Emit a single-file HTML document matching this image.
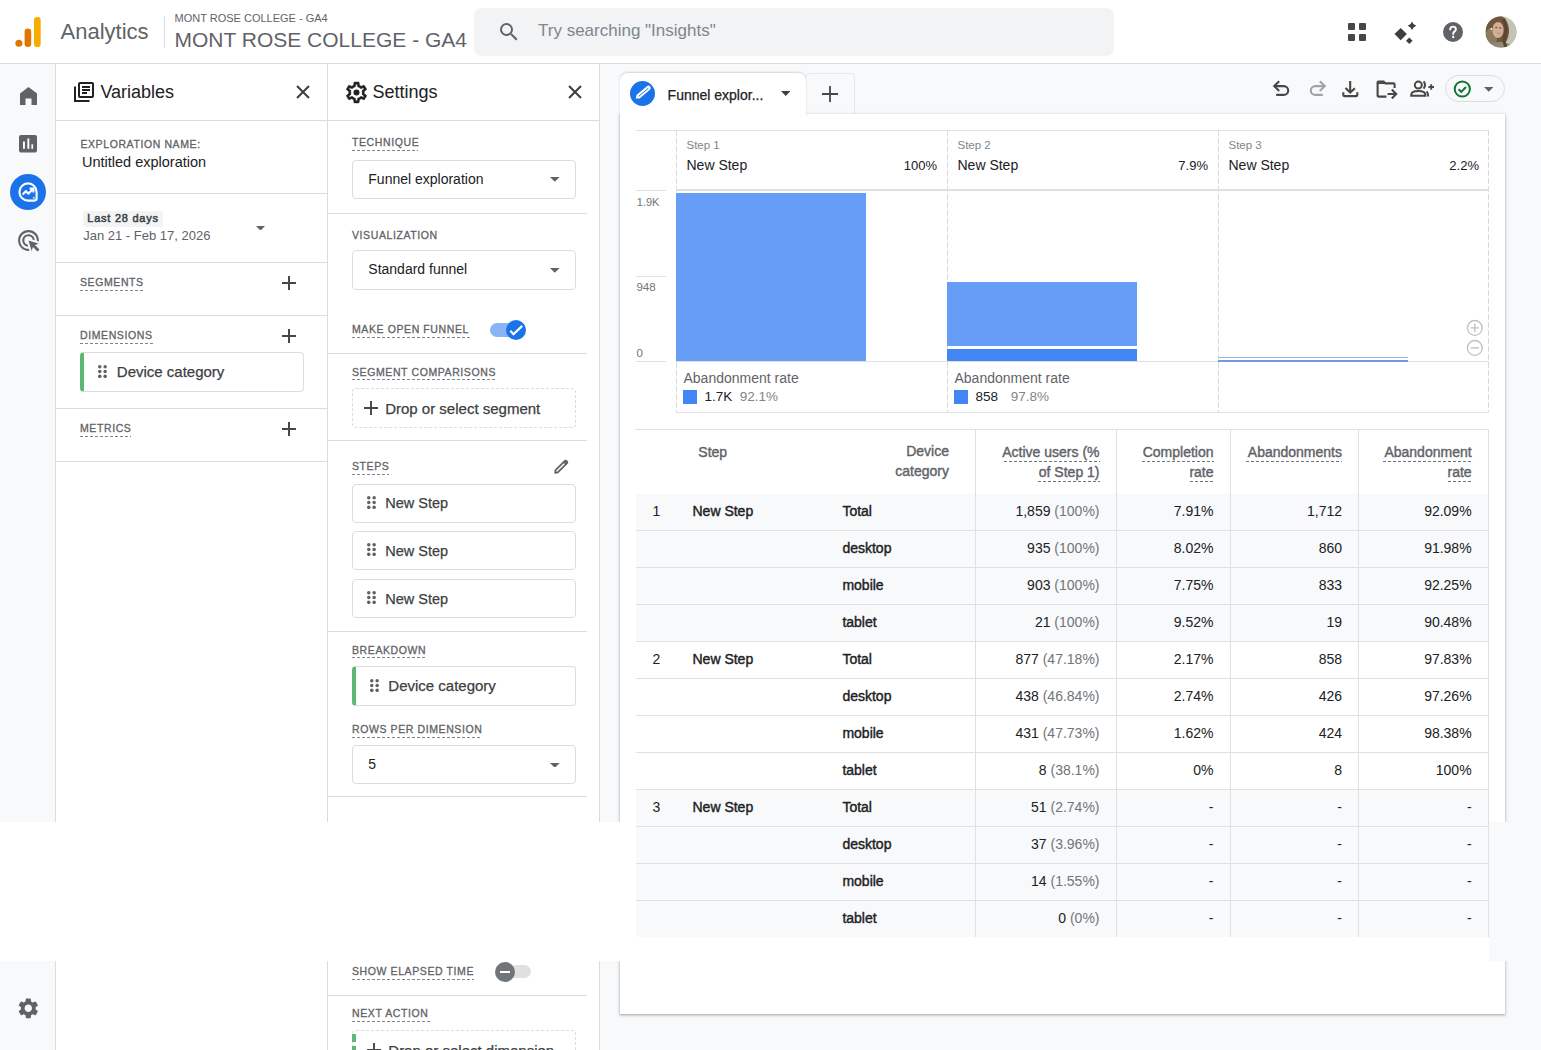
<!DOCTYPE html><html><head><meta charset="utf-8"><style>
html,body{margin:0;padding:0;width:1541px;height:1050px;overflow:hidden;background:#fff;position:relative;font-family:"Liberation Sans",sans-serif;}
.t{position:absolute;white-space:pre;line-height:1;}
svg{display:block;}
</style></head><body>
<div style="position:absolute;left:0px;top:0px;width:1541px;height:63px;background:#fff;"></div>
<div style="position:absolute;left:0px;top:63px;width:1541px;height:1px;background:#dadce0;"></div>
<div style="position:absolute;left:0px;top:64px;width:55px;height:986px;background:#f8f9fa;"></div>
<div style="position:absolute;left:55px;top:64px;width:1px;height:986px;background:#dadce0;"></div>
<div style="position:absolute;left:56px;top:64px;width:271px;height:986px;background:#fff;"></div>
<div style="position:absolute;left:327px;top:64px;width:1px;height:986px;background:#dadce0;"></div>
<div style="position:absolute;left:328px;top:64px;width:271px;height:986px;background:#fff;"></div>
<div style="position:absolute;left:599px;top:64px;width:1px;height:986px;background:#dadce0;"></div>
<div style="position:absolute;left:600px;top:64px;width:941px;height:986px;background:#f8f9fa;"></div>
<svg style="position:absolute;left:14px;top:16px;" width="28" height="32" viewBox="0 0 28 32">
<rect x="20" y="1" width="6.7" height="30" rx="3.35" fill="#f9ab00"/>
<rect x="10.6" y="12.6" width="6.6" height="18.4" rx="3.3" fill="#e37400"/>
<circle cx="4.9" cy="27.2" r="3.5" fill="#e37400"/>
</svg>
<div class="t" style="left:60.5px;top:21.38px;font-size:22px;color:#5f6368;font-weight:400;">Analytics</div>
<div style="position:absolute;left:164px;top:16px;width:1px;height:32px;background:#dadce0;"></div>
<div class="t" style="left:174.5px;top:12.69px;font-size:11px;color:#5f6368;font-weight:400;">MONT ROSE COLLEGE - GA4</div>
<div class="t" style="left:174.5px;top:29.42px;font-size:21px;color:#5f6368;font-weight:400;">MONT ROSE COLLEGE - GA4</div>
<div style="position:absolute;left:474px;top:8px;width:640px;height:48px;background:#f1f3f4;border-radius:8px;"></div>
<svg style="position:absolute;left:497px;top:20px;" width="24" height="24" viewBox="0 0 24 24"><path fill="#5f6368" d="M15.5 14h-.79l-.28-.27A6.47 6.47 0 0 0 16 9.5 6.5 6.5 0 1 0 9.5 16c1.61 0 3.09-.59 4.23-1.57l.27.28v.79l5 4.99L20.49 19l-4.99-5zm-6 0C7.01 14 5 11.99 5 9.5S7.01 5 9.5 5 14 7.01 14 9.5 11.99 14 9.5 14z"/></svg>
<div class="t" style="left:538px;top:21.81px;font-size:17px;color:#80868b;font-weight:400;">Try searching "Insights"</div>
<div style="position:absolute;left:1348px;top:23px;width:7px;height:7px;background:#474747;border-radius:1px;"></div>
<div style="position:absolute;left:1359px;top:23px;width:7px;height:7px;background:#474747;border-radius:1px;"></div>
<div style="position:absolute;left:1348px;top:34px;width:7px;height:7px;background:#474747;border-radius:1px;"></div>
<div style="position:absolute;left:1359px;top:34px;width:7px;height:7px;background:#474747;border-radius:1px;"></div>
<svg style="position:absolute;left:1392px;top:20px;" width="26" height="26" viewBox="0 0 26 26">
<path fill="#3c4043" d="M8.7 7.9 L14.9 14.1 L8.7 20.3 L2.5 14.1 Z"/>
<path fill="#3c4043" d="M17.3 17.5 L20.6 20.8 L17.3 24.1 L14 20.8 Z"/>
<path fill="#3c4043" d="M20 1.4 Q20.9 4.6 24.3 5.8 Q20.9 7 20 10.1 Q19.1 7 15.7 5.8 Q19.1 4.6 20 1.4 Z"/>
</svg>
<svg style="position:absolute;left:1443px;top:22px;" width="20" height="20" viewBox="0 0 20 20"><circle cx="10" cy="10" r="10" fill="#5f6368"/>
<path d="M7.2 7.6 Q7.2 4.6 10.1 4.6 Q12.9 4.6 12.9 7.2 Q12.9 8.6 11.4 9.6 Q10.2 10.4 10.2 12" stroke="#fff" stroke-width="1.9" fill="none" stroke-linecap="round"/>
<circle cx="10.2" cy="15" r="1.2" fill="#fff"/></svg>
<svg style="position:absolute;left:1485px;top:16px;filter:blur(0.5px);border-radius:50%;" width="32" height="32" viewBox="0 0 32 32"><defs><clipPath id="avc"><circle cx="16" cy="16" r="15.8"/></clipPath><filter id="avb" x="-10%" y="-10%" width="120%" height="120%"><feGaussianBlur stdDeviation="0.7"/></filter></defs><g clip-path="url(#avc)"><g filter="url(#avb)">
<rect width="32" height="32" fill="#b9baa9"/>
<rect x="21" y="0" width="11" height="32" fill="#c3c4b4"/>
<ellipse cx="12.5" cy="15" rx="11.5" ry="16" fill="#6f563d"/>
<ellipse cx="6" cy="22" rx="6" ry="10" fill="#8b7a5e"/>
<ellipse cx="15" cy="33" rx="13" ry="7" fill="#8f8a76"/>
<ellipse cx="13" cy="14" rx="5.6" ry="8" fill="#d2ae97"/>
<ellipse cx="11.2" cy="11.5" rx="1.3" ry=".7" fill="#7d5a45"/><ellipse cx="15.3" cy="12" rx="1.2" ry=".7" fill="#7d5a45"/>
<ellipse cx="13.6" cy="17.2" rx="2" ry=".7" fill="#bf8f7a"/>
<circle cx="6.3" cy="13" r=".9" fill="#f4efe6"/>
<path d="M18.5 3 Q22.5 10 20 20 Q18 26 21 31" stroke="#5a4431" stroke-width="3" fill="none"/>
<rect x="-2" y="-2" width="36" height="36" fill="none"/></g></g></svg>
<svg style="position:absolute;left:18px;top:84px;" width="22" height="24" viewBox="0 0 22 24"><path fill="#5f6368" d="M2 21 V9.5 L10.5 3 L19 9.5 V21 H13.5 V14.5 H7.5 V21 Z" /></svg>
<svg style="position:absolute;left:19px;top:135px;" width="18" height="18" viewBox="0 0 18 18"><rect x="0" y="0" width="18" height="17.6" rx="2" fill="#5f6368"/><rect x="4" y="6.5" width="1.9" height="7.3" fill="#fff"/><rect x="8.4" y="3.5" width="1.9" height="10.3" fill="#fff"/><rect x="12.4" y="9.3" width="1.7" height="4.5" fill="#fff"/></svg>
<div style="position:absolute;left:10px;top:174px;width:36px;height:36px;border-radius:50%;background:#1a73e8;"></div>
<svg style="position:absolute;left:17px;top:181px;" width="22" height="22" viewBox="0 0 22 22"><path d="M19.6 11 A8.6 8.6 0 1 0 11 19.6 H17.6 Q19.6 19.6 19.6 17.6 Z" stroke="#fff" stroke-width="2.1" fill="none"/>
<path d="M5.6 13.6 L8.9 10.2 L11.4 12.6 L15.6 8.4" stroke="#fff" stroke-width="2.1" fill="none"/><path d="M12.6 7.6 H16.4 V11.4" stroke="#fff" stroke-width="2.1" fill="none"/><circle cx="16.8" cy="16.8" r="0.9" fill="#fff"/></svg>
<svg style="position:absolute;left:15.8px;top:228.3px;" width="25" height="25" viewBox="0 0 24 24"><path fill="#5f6368" d="M11.71 17.99A5.993 5.993 0 0 1 6 12c0-3.31 2.69-6 6-6 3.220 0 5.840 2.530 5.990 5.710l-2.100-.630a3.999 3.999 0 1 0-4.810 4.810l.630 2.100zM22 12c0 .3-.01.6-.04.9l-1.970-.590c.010-.100.010-.210.010-.310 0-4.420-3.580-8-8-8s-8 3.580-8 8 3.580 8 8 8c.1 0 .21 0 .31-.01l.59 1.97c-.3.03-.6.04-.9.04-5.52 0-10-4.48-10-10S6.48 2 12 2s10 4.48 10 10zm-3.77 4.26L22 15l-10-3 3 10 1.26-3.77 4.27 4.27 1.98-1.98-4.28-4.26z"/></svg>
<svg style="position:absolute;left:15.7px;top:996.2px;" width="24.6" height="24.6" viewBox="0 0 24 24"><path fill="#5f6368" d="M19.14 12.94c.04-.3.06-.61.06-.94 0-.32-.02-.64-.07-.94l2.03-1.58a.49.49 0 0 0 .12-.61l-1.92-3.32a.488.488 0 0 0-.59-.22l-2.39.96c-.5-.38-1.03-.7-1.62-.94l-.36-2.54a.484.484 0 0 0-.48-.41h-3.84c-.24 0-.43.17-.47.41l-.36 2.54c-.59.24-1.13.57-1.62.94l-2.39-.96c-.22-.08-.47 0-.59.22L2.74 8.87c-.12.21-.08.47.12.61l2.03 1.58c-.05.3-.09.63-.09.94s.02.64.07.94l-2.03 1.58a.49.49 0 0 0-.12.61l1.92 3.32c.12.22.37.29.59.22l2.39-.96c.5.38 1.03.7 1.62.94l.36 2.54c.05.24.24.41.48.41h3.84c.24 0 .44-.17.47-.41l.36-2.54c.59-.24 1.13-.56 1.62-.94l2.39.96c.22.08.47 0 .59-.22l1.92-3.32c.12-.22.07-.47-.12-.61l-2.01-1.58zM12 15.6c-1.98 0-3.6-1.62-3.6-3.6s1.62-3.6 3.6-3.6 3.6 1.62 3.6 3.6-1.62 3.6-3.6 3.6z"/></svg>
<svg style="position:absolute;left:74px;top:82px;" width="20" height="20" viewBox="0 0 20 20"><path d="M1 4.5V19H15.5" stroke="#202124" stroke-width="2" fill="none"/>
<rect x="5" y="1" width="14" height="14" rx="1" stroke="#202124" stroke-width="2" fill="none"/>
<path d="M8 5H16M8 8H16M8 11H13" stroke="#202124" stroke-width="1.8"/></svg>
<div class="t" style="left:100.4px;top:82.96px;font-size:18px;color:#202124;font-weight:400;">Variables</div>
<svg style="position:absolute;left:296px;top:85px;" width="14" height="14" viewBox="0 0 14 14"><path d="M1 1L13 13M13 1L1 13" stroke="#3c4043" stroke-width="2"/></svg>
<div style="position:absolute;left:56px;top:120px;width:271px;height:1px;background:#dadce0;"></div>
<div class="t" style="left:80.4px;top:139.11px;font-size:10.5px;color:#5f6368;font-weight:400;letter-spacing:0.6px;-webkit-text-stroke:0.3px currentColor;">EXPLORATION NAME:</div>
<div class="t" style="left:82px;top:154.73px;font-size:14.5px;color:#202124;font-weight:400;">Untitled exploration</div>
<div style="position:absolute;left:56px;top:193px;width:271px;height:1px;background:#dadce0;"></div>
<div style="position:absolute;left:83px;top:211px;width:80px;height:15.5px;background:#f1f3f4;border-radius:2px;"></div>
<div class="t" style="left:87.3px;top:212.99px;font-size:11px;color:#3c4043;font-weight:400;letter-spacing:0.75px;-webkit-text-stroke:0.5px currentColor;">Last 28 days</div>
<div class="t" style="left:83.2px;top:229.00px;font-size:13px;color:#5f6368;font-weight:400;">Jan 21 - Feb 17, 2026</div>
<svg style="position:absolute;left:255.5px;top:225.8px;" width="9" height="4.6" viewBox="0 0 9 4.6"><path d="M0 0H9L4.5 4.6Z" fill="#5f6368"/></svg>
<div style="position:absolute;left:56px;top:262px;width:271px;height:1px;background:#dadce0;"></div>
<div class="t" style="left:80px;top:277.41px;font-size:10.5px;color:#5f6368;font-weight:400;letter-spacing:0.6px;-webkit-text-stroke:0.3px currentColor;">SEGMENTS</div>
<div style="position:absolute;left:80px;top:289.9px;width:62.6px;height:1px;background:repeating-linear-gradient(90deg,#80868b 0 3px,transparent 3px 5px);"></div>
<svg style="position:absolute;left:282px;top:276px;" width="14" height="14" viewBox="0 0 14 14"><path d="M7.0 0V14M0 7.0H14" stroke="#474747" stroke-width="2"/></svg>
<div style="position:absolute;left:56px;top:315px;width:271px;height:1px;background:#dadce0;"></div>
<div class="t" style="left:80px;top:330.11px;font-size:10.5px;color:#5f6368;font-weight:400;letter-spacing:0.6px;-webkit-text-stroke:0.3px currentColor;">DIMENSIONS</div>
<div style="position:absolute;left:80px;top:342.6px;width:73px;height:1px;background:repeating-linear-gradient(90deg,#80868b 0 3px,transparent 3px 5px);"></div>
<svg style="position:absolute;left:282px;top:329px;" width="14" height="14" viewBox="0 0 14 14"><path d="M7.0 0V14M0 7.0H14" stroke="#474747" stroke-width="2"/></svg>
<div style="position:absolute;box-sizing:border-box;left:80px;top:352px;width:224px;height:40px;border-radius:4px;border:1px solid #dadce0;border-left:4px solid #5bb974;"></div>
<svg style="position:absolute;left:97.5px;top:365px;" width="10" height="13" viewBox="0 0 10 13"><circle cx="1.75" cy="1.75" r="1.75" fill="#5f6368"/><circle cx="1.75" cy="6.55" r="1.75" fill="#5f6368"/><circle cx="1.75" cy="11.35" r="1.75" fill="#5f6368"/><circle cx="7.15" cy="1.75" r="1.75" fill="#5f6368"/><circle cx="7.15" cy="6.55" r="1.75" fill="#5f6368"/><circle cx="7.15" cy="11.35" r="1.75" fill="#5f6368"/></svg>
<div class="t" style="left:116.8px;top:364.10px;font-size:15px;color:#3c4043;font-weight:400;-webkit-text-stroke:0.25px currentColor;">Device category</div>
<div style="position:absolute;left:56px;top:408px;width:271px;height:1px;background:#dadce0;"></div>
<div class="t" style="left:80px;top:423.11px;font-size:10.5px;color:#5f6368;font-weight:400;letter-spacing:0.6px;-webkit-text-stroke:0.3px currentColor;">METRICS</div>
<div style="position:absolute;left:80px;top:435.6px;width:51.3px;height:1px;background:repeating-linear-gradient(90deg,#80868b 0 3px,transparent 3px 5px);"></div>
<svg style="position:absolute;left:282px;top:422px;" width="14" height="14" viewBox="0 0 14 14"><path d="M7.0 0V14M0 7.0H14" stroke="#474747" stroke-width="2"/></svg>
<div style="position:absolute;left:56px;top:461px;width:271px;height:1px;background:#dadce0;"></div>
<svg style="position:absolute;left:343.5px;top:79.7px;" width="25" height="25" viewBox="0 0 24 24"><path fill="#202124" stroke="#202124" stroke-width="0.5" d="M19.43 12.98c.04-.32.07-.64.07-.98 0-.34-.03-.66-.07-.98l2.11-1.65c.19-.15.24-.42.12-.64l-2-3.46a.5.5 0 0 0-.61-.22l-2.49 1c-.52-.4-1.08-.73-1.69-.98l-.38-2.65A.488.488 0 0 0 14 2h-4c-.25 0-.46.18-.49.42l-.38 2.65c-.61.25-1.170.590-1.690.980l-2.490-1a.566.566 0 0 0-.180-.030c-.170 0-.340.090-.430.250l-2 3.460c-.130.220-.070.490.120.640l2.110 1.650c-.040.320-.070.650-.070.980 0 .330.030.660.070.980l-2.110 1.650c-.190.150-.240.420-.120.640l2 3.460a.5.5 0 0 0 .610.220l2.490-1c.520.400 1.080.730 1.690.980l.380 2.650c.030.240.240.420.490.420h4c.250 0 .460-.180.490-.420l.380-2.650c.610-.250 1.170-.590 1.690-.980l2.490 1c.060.020.120.030.180.030.170 0 .340-.090.430-.250l2-3.460c.120-.220.070-.490-.120-.640l-2.110-1.650zm-1.98-1.71c.04.31.05.52.05.73 0 .21-.02.43-.05.73l-.14 1.13.89.7 1.08.84-.7 1.21-1.27-.51-1.04-.42-.9.68c-.43.32-.84.56-1.25.73l-1.06.43-.16 1.13-.2 1.35h-1.4l-.19-1.35-.16-1.13-1.06-.43c-.43-.18-.83-.41-1.23-.71l-.91-.7-1.06.43-1.27.51-.7-1.21 1.08-.84.89-.7-.14-1.13c-.03-.31-.05-.54-.05-.74s.02-.43.05-.73l.14-1.13-.89-.7-1.08-.84.7-1.21 1.27.51 1.04.42.9-.68c.43-.32.84-.56 1.25-.73l1.06-.43.16-1.13.2-1.35h1.39l.19 1.35.16 1.13 1.06.43c.43.18.83.41 1.23.71l.91.7 1.06-.43 1.27-.51.7 1.21-1.07.85-.89.7.14 1.13z"/><circle cx="12" cy="12" r="2.9" fill="#202124"/></svg>
<div class="t" style="left:372.5px;top:82.96px;font-size:18px;color:#202124;font-weight:400;">Settings</div>
<svg style="position:absolute;left:568px;top:85px;" width="14" height="14" viewBox="0 0 14 14"><path d="M1 1L13 13M13 1L1 13" stroke="#3c4043" stroke-width="2"/></svg>
<div style="position:absolute;left:328px;top:120px;width:271px;height:1px;background:#dadce0;"></div>
<div class="t" style="left:352px;top:137.41px;font-size:10.5px;color:#5f6368;font-weight:400;letter-spacing:0.6px;-webkit-text-stroke:0.3px currentColor;">TECHNIQUE</div>
<div style="position:absolute;left:352px;top:149.9px;width:66.3px;height:1px;background:repeating-linear-gradient(90deg,#80868b 0 3px,transparent 3px 5px);"></div>
<div style="position:absolute;box-sizing:border-box;left:352px;top:159.5px;width:224px;height:39.5px;border-radius:4px;border:1px solid #dadce0;"></div>
<div class="t" style="left:368.3px;top:171.65px;font-size:14px;color:#202124;font-weight:400;">Funnel exploration</div>
<svg style="position:absolute;left:550px;top:177px;" width="9.6" height="4.8" viewBox="0 0 9.6 4.8"><path d="M0 0H9.6L4.8 4.8Z" fill="#5f6368"/></svg>
<div style="position:absolute;left:328px;top:213px;width:259px;height:1px;background:#dadce0;"></div>
<div class="t" style="left:352px;top:230.11px;font-size:10.5px;color:#5f6368;font-weight:400;letter-spacing:0.6px;-webkit-text-stroke:0.3px currentColor;">VISUALIZATION</div>
<div style="position:absolute;box-sizing:border-box;left:352px;top:250.3px;width:224px;height:39.5px;border-radius:4px;border:1px solid #dadce0;"></div>
<div class="t" style="left:368.3px;top:262.15px;font-size:14px;color:#202124;font-weight:400;">Standard funnel</div>
<svg style="position:absolute;left:550px;top:268px;" width="9.6" height="4.8" viewBox="0 0 9.6 4.8"><path d="M0 0H9.6L4.8 4.8Z" fill="#5f6368"/></svg>
<div class="t" style="left:352px;top:324.31px;font-size:10.5px;color:#5f6368;font-weight:400;letter-spacing:0.6px;-webkit-text-stroke:0.3px currentColor;">MAKE OPEN FUNNEL</div>
<div style="position:absolute;left:352px;top:336.8px;width:117.7px;height:1px;background:repeating-linear-gradient(90deg,#80868b 0 3px,transparent 3px 5px);"></div>
<div style="position:absolute;left:490px;top:323px;width:34px;height:14px;background:#8ab4f8;border-radius:7px;"></div>
<svg style="position:absolute;left:506px;top:320px;" width="20" height="20" viewBox="0 0 20 20"><circle cx="10" cy="10" r="10" fill="#1a73e8"/><path d="M4.3 10.8L7.5 14.2L16.2 5.9" stroke="#fff" stroke-width="2.2" fill="none"/></svg>
<div style="position:absolute;left:328px;top:353px;width:259px;height:1px;background:#dadce0;"></div>
<div class="t" style="left:352px;top:366.51px;font-size:10.5px;color:#5f6368;font-weight:400;letter-spacing:0.6px;-webkit-text-stroke:0.3px currentColor;">SEGMENT COMPARISONS</div>
<div style="position:absolute;left:352px;top:379.0px;width:144px;height:1px;background:repeating-linear-gradient(90deg,#80868b 0 3px,transparent 3px 5px);"></div>
<div style="position:absolute;box-sizing:border-box;left:352px;top:388px;width:224px;height:40px;border-radius:4px;border:1px dashed #dadce0;"></div>
<svg style="position:absolute;left:364px;top:400.5px;" width="14" height="14" viewBox="0 0 14 14"><path d="M7.0 0V14M0 7.0H14" stroke="#474747" stroke-width="1.9"/></svg>
<div class="t" style="left:385.2px;top:400.90px;font-size:15px;color:#3c4043;font-weight:400;-webkit-text-stroke:0.25px currentColor;">Drop or select segment</div>
<div style="position:absolute;left:328px;top:440px;width:259px;height:1px;background:#dadce0;"></div>
<div class="t" style="left:352px;top:461.41px;font-size:10.5px;color:#5f6368;font-weight:400;letter-spacing:0.6px;-webkit-text-stroke:0.3px currentColor;">STEPS</div>
<div style="position:absolute;left:352px;top:473.9px;width:36.9px;height:1px;background:repeating-linear-gradient(90deg,#80868b 0 3px,transparent 3px 5px);"></div>
<svg style="position:absolute;left:553px;top:459px;" width="16" height="16" viewBox="0 0 16 16"><path d="M2.2 13.8 L2.6 11.2 L11.6 2.2 Q12.6 1.2 13.6 2.2 L13.8 2.4 Q14.8 3.4 13.8 4.4 L4.8 13.4 Z" stroke="#5f6368" stroke-width="1.8" fill="none" stroke-linejoin="round"/><path d="M11.2 2.6L13.4 4.8" stroke="#5f6368" stroke-width="2.4"/></svg>
<div style="position:absolute;box-sizing:border-box;left:352px;top:483.5px;width:224px;height:39px;border-radius:4px;border:1px solid #dadce0;"></div>
<svg style="position:absolute;left:366.5px;top:495.5px;" width="10" height="13" viewBox="0 0 10 13"><circle cx="1.75" cy="1.75" r="1.75" fill="#5f6368"/><circle cx="1.75" cy="6.55" r="1.75" fill="#5f6368"/><circle cx="1.75" cy="11.35" r="1.75" fill="#5f6368"/><circle cx="7.15" cy="1.75" r="1.75" fill="#5f6368"/><circle cx="7.15" cy="6.55" r="1.75" fill="#5f6368"/><circle cx="7.15" cy="11.35" r="1.75" fill="#5f6368"/></svg>
<div class="t" style="left:385.2px;top:495.73px;font-size:14.5px;color:#3c4043;font-weight:400;-webkit-text-stroke:0.25px currentColor;">New Step</div>
<div style="position:absolute;box-sizing:border-box;left:352px;top:531.3px;width:224px;height:39px;border-radius:4px;border:1px solid #dadce0;"></div>
<svg style="position:absolute;left:366.5px;top:543.3px;" width="10" height="13" viewBox="0 0 10 13"><circle cx="1.75" cy="1.75" r="1.75" fill="#5f6368"/><circle cx="1.75" cy="6.55" r="1.75" fill="#5f6368"/><circle cx="1.75" cy="11.35" r="1.75" fill="#5f6368"/><circle cx="7.15" cy="1.75" r="1.75" fill="#5f6368"/><circle cx="7.15" cy="6.55" r="1.75" fill="#5f6368"/><circle cx="7.15" cy="11.35" r="1.75" fill="#5f6368"/></svg>
<div class="t" style="left:385.2px;top:543.53px;font-size:14.5px;color:#3c4043;font-weight:400;-webkit-text-stroke:0.25px currentColor;">New Step</div>
<div style="position:absolute;box-sizing:border-box;left:352px;top:579.4px;width:224px;height:39px;border-radius:4px;border:1px solid #dadce0;"></div>
<svg style="position:absolute;left:366.5px;top:591.4px;" width="10" height="13" viewBox="0 0 10 13"><circle cx="1.75" cy="1.75" r="1.75" fill="#5f6368"/><circle cx="1.75" cy="6.55" r="1.75" fill="#5f6368"/><circle cx="1.75" cy="11.35" r="1.75" fill="#5f6368"/><circle cx="7.15" cy="1.75" r="1.75" fill="#5f6368"/><circle cx="7.15" cy="6.55" r="1.75" fill="#5f6368"/><circle cx="7.15" cy="11.35" r="1.75" fill="#5f6368"/></svg>
<div class="t" style="left:385.2px;top:591.63px;font-size:14.5px;color:#3c4043;font-weight:400;-webkit-text-stroke:0.25px currentColor;">New Step</div>
<div style="position:absolute;left:328px;top:631px;width:259px;height:1px;background:#dadce0;"></div>
<div class="t" style="left:352px;top:644.61px;font-size:10.5px;color:#5f6368;font-weight:400;letter-spacing:0.6px;-webkit-text-stroke:0.3px currentColor;">BREAKDOWN</div>
<div style="position:absolute;left:352px;top:657.1px;width:73.2px;height:1px;background:repeating-linear-gradient(90deg,#80868b 0 3px,transparent 3px 5px);"></div>
<div style="position:absolute;box-sizing:border-box;left:352px;top:666.3px;width:224px;height:39.7px;border-radius:4px;border:1px solid #dadce0;border-left:4px solid #5bb974;"></div>
<svg style="position:absolute;left:369.5px;top:679px;" width="10" height="13" viewBox="0 0 10 13"><circle cx="1.75" cy="1.75" r="1.75" fill="#5f6368"/><circle cx="1.75" cy="6.55" r="1.75" fill="#5f6368"/><circle cx="1.75" cy="11.35" r="1.75" fill="#5f6368"/><circle cx="7.15" cy="1.75" r="1.75" fill="#5f6368"/><circle cx="7.15" cy="6.55" r="1.75" fill="#5f6368"/><circle cx="7.15" cy="11.35" r="1.75" fill="#5f6368"/></svg>
<div class="t" style="left:388.3px;top:678.10px;font-size:15px;color:#3c4043;font-weight:400;-webkit-text-stroke:0.25px currentColor;">Device category</div>
<div class="t" style="left:352px;top:724.11px;font-size:10.5px;color:#5f6368;font-weight:400;letter-spacing:0.6px;-webkit-text-stroke:0.3px currentColor;">ROWS PER DIMENSION</div>
<div style="position:absolute;left:352px;top:736.6px;width:129px;height:1px;background:repeating-linear-gradient(90deg,#80868b 0 3px,transparent 3px 5px);"></div>
<div style="position:absolute;box-sizing:border-box;left:352px;top:744.5px;width:224px;height:39.5px;border-radius:4px;border:1px solid #dadce0;"></div>
<div class="t" style="left:368.3px;top:756.65px;font-size:14px;color:#202124;font-weight:400;">5</div>
<svg style="position:absolute;left:550px;top:762.5px;" width="9.6" height="4.8" viewBox="0 0 9.6 4.8"><path d="M0 0H9.6L4.8 4.8Z" fill="#5f6368"/></svg>
<div style="position:absolute;left:328px;top:796px;width:259px;height:1px;background:#dadce0;"></div>
<div class="t" style="left:352px;top:966.11px;font-size:10.5px;color:#5f6368;font-weight:400;letter-spacing:0.6px;-webkit-text-stroke:0.3px currentColor;">SHOW ELAPSED TIME</div>
<div style="position:absolute;left:352px;top:978.6px;width:122.3px;height:1px;background:repeating-linear-gradient(90deg,#80868b 0 3px,transparent 3px 5px);"></div>
<div style="position:absolute;left:509px;top:965.4px;width:22px;height:13px;background:#e0e0e0;border-radius:6.5px;"></div>
<svg style="position:absolute;left:495px;top:962px;" width="20" height="20" viewBox="0 0 20 20"><circle cx="10" cy="10" r="10" fill="#70757a"/><path d="M5 10H15" stroke="#fff" stroke-width="2"/></svg>
<div style="position:absolute;left:328px;top:995px;width:259px;height:1px;background:#dadce0;"></div>
<div class="t" style="left:352px;top:1008.31px;font-size:10.5px;color:#5f6368;font-weight:400;letter-spacing:0.6px;-webkit-text-stroke:0.3px currentColor;">NEXT ACTION</div>
<div style="position:absolute;left:352px;top:1020.8px;width:77.7px;height:1px;background:repeating-linear-gradient(90deg,#80868b 0 3px,transparent 3px 5px);"></div>
<div style="position:absolute;box-sizing:border-box;left:352px;top:1030px;width:224px;height:40px;border-radius:4px;border:1px dashed #dadce0;"></div>
<div style="position:absolute;left:352px;top:1034px;width:4px;height:8px;background:#5bb974;"></div>
<div style="position:absolute;left:352px;top:1046px;width:4px;height:8px;background:#5bb974;"></div>
<svg style="position:absolute;left:367px;top:1042.5px;" width="14" height="14" viewBox="0 0 14 14"><path d="M7.0 0V14M0 7.0H14" stroke="#474747" stroke-width="1.9"/></svg>
<div class="t" style="left:388.3px;top:1042.80px;font-size:15px;color:#3c4043;font-weight:400;-webkit-text-stroke:0.25px currentColor;">Drop or select dimension</div>
<div style="position:absolute;left:805px;top:72.5px;width:50px;height:41px;box-sizing:border-box;background:#f8f9fa;border:1px solid #e6e8ea;border-bottom:none;border-radius:5px 5px 0 0;"></div>
<svg style="position:absolute;left:822px;top:86px;" width="16" height="16" viewBox="0 0 16 16"><path d="M8.0 0V16M0 8.0H16" stroke="#474747" stroke-width="1.8"/></svg>
<div style="position:absolute;left:619.5px;top:113.5px;width:885.5px;height:900.5px;background:#fff;box-shadow:0 1px 2px 0 rgba(60,64,67,.3),0 1px 3px 1px rgba(60,64,67,.15);"></div>
<div style="position:absolute;left:619.5px;top:72.5px;width:186px;height:45px;background:#fff;border-radius:8px 8px 0 0;box-shadow:0 -1px 2px 0 rgba(60,64,67,.2);"></div>
<div style="position:absolute;left:619.5px;top:113.5px;width:186px;height:6px;background:#fff;"></div>
<svg style="position:absolute;left:630px;top:81px;" width="25" height="25" viewBox="0 0 25 25"><circle cx="12.5" cy="12.5" r="12.5" fill="#1a73e8"/><g transform="translate(12.6 11.9) rotate(-40)"><path d="M-8.9 0 L-5.8 -2.3 H7.6 A2.3 2.3 0 0 1 7.6 2.3 H-5.8 Z" fill="#fff"/><path d="M-5.2 0.1 H7.4" stroke="#1a73e8" stroke-width="0.9"/></g></svg>
<div class="t" style="left:667.6px;top:88.05px;font-size:14px;color:#202124;font-weight:400;-webkit-text-stroke:0.25px currentColor;">Funnel explor...</div>
<svg style="position:absolute;left:780.5px;top:91px;" width="9.5" height="5" viewBox="0 0 9.5 5"><path d="M0 0H9.5L4.75 5Z" fill="#3c4043"/></svg>
<svg style="position:absolute;left:1272px;top:79px;" width="20" height="20" viewBox="0 0 20 20"><path d="M7.2 2.2 L2.2 7.1 L7.2 12" stroke="#474747" stroke-width="2.1" fill="none"/><path d="M2.6 7.1 H11.8 A4.4 4.4 0 0 1 11.8 15.9 H4.2" stroke="#474747" stroke-width="2.1" fill="none"/></svg>
<svg style="position:absolute;left:1307px;top:79px;" width="20" height="20" viewBox="0 0 20 20"><g transform="translate(20 0) scale(-1 1)"><path d="M7.2 2.2 L2.2 7.1 L7.2 12" stroke="#a0a4a8" stroke-width="2.1" fill="none"/><path d="M2.6 7.1 H11.8 A4.4 4.4 0 0 1 11.8 15.9 H4.2" stroke="#a0a4a8" stroke-width="2.1" fill="none"/></g></svg>
<svg style="position:absolute;left:1341px;top:80px;" width="18" height="18" viewBox="0 0 18 18"><path d="M9.2 1 V12 M4.5 7.9 L9.2 12.6 L13.9 8.2" stroke="#474747" stroke-width="2.1" fill="none"/><path d="M2.3 12.2 V15.1 Q2.3 16.1 3.3 16.1 H15.3 Q16.3 16.1 16.3 15.1 V12.2" stroke="#474747" stroke-width="2.1" fill="none"/></svg>
<svg style="position:absolute;left:1375px;top:80px;" width="24" height="20" viewBox="0 0 24 20"><path d="M11.4 16.6 H3.6 Q2.6 16.6 2.6 15.6 V2.6 Q2.6 1.6 3.6 1.6 H8.6 L10.4 3.4 H18.6 Q19.6 3.4 19.6 4.4 V8" stroke="#474747" stroke-width="2.1" fill="none"/><path d="M2.6 2.2 H9 L10.6 4 H2.6 Z" fill="#474747"/><path d="M12.6 14 H21 M16.8 9.6 L21.2 14 L16.8 18.4" stroke="#474747" stroke-width="2.1" fill="none"/></svg>
<svg style="position:absolute;left:1409px;top:80px;" width="27" height="19" viewBox="0 0 27 19"><circle cx="9.3" cy="5.1" r="3.5" stroke="#474747" stroke-width="2" fill="none"/><path d="M2.2 15.8 V15.2 Q2.2 11.1 9.3 11.1 Q16.4 11.1 16.4 15.2 V15.8 Z" stroke="#474747" stroke-width="2" fill="none"/><path d="M14.6 1.4 Q17.4 5 14.6 8.6 M17.6 11.4 Q19.2 13 19.2 16.4" stroke="#474747" stroke-width="2" fill="none"/><path d="M22.2 4.2 V9.8 M19.4 7 H25" stroke="#474747" stroke-width="1.9"/></svg>
<div style="position:absolute;left:1445px;top:75.3px;width:60px;height:27px;box-sizing:border-box;border:1px solid #dadce0;border-radius:14px;"></div>
<svg style="position:absolute;left:1453px;top:80px;" width="19" height="18" viewBox="0 0 19 18"><circle cx="9.3" cy="9" r="7.6" stroke="#137333" stroke-width="2" fill="none"/><path d="M5.6 9.2 L8.3 11.9 L13 7" stroke="#137333" stroke-width="2" fill="none"/></svg>
<svg style="position:absolute;left:1483.5px;top:87px;" width="9.5" height="4.8" viewBox="0 0 9.5 4.8"><path d="M0 0H9.5L4.75 4.8Z" fill="#5f6368"/></svg>
<div style="position:absolute;left:636px;top:130px;width:853px;height:1px;background:#e0e0e0;"></div>
<div style="position:absolute;left:676px;top:130px;width:1px;height:282px;background:repeating-linear-gradient(180deg,#dcdcdc 0 6px,transparent 6px 8px);"></div>
<div style="position:absolute;left:947px;top:130px;width:1px;height:282px;background:repeating-linear-gradient(180deg,#dcdcdc 0 6px,transparent 6px 8px);"></div>
<div style="position:absolute;left:1218px;top:130px;width:1px;height:282px;background:repeating-linear-gradient(180deg,#dcdcdc 0 6px,transparent 6px 8px);"></div>
<div style="position:absolute;left:1488px;top:130px;width:1px;height:282px;background:repeating-linear-gradient(180deg,#dcdcdc 0 6px,transparent 6px 8px);"></div>
<div style="position:absolute;left:676px;top:189px;width:813px;height:2px;background:#e0e0e0;"></div>
<div style="position:absolute;left:676px;top:412px;width:813px;height:1px;background:#e0e0e0;"></div>
<div class="t" style="left:686.5px;top:140.07px;font-size:11.5px;color:#80868b;font-weight:400;">Step 1</div>
<div class="t" style="left:686.5px;top:157.85px;font-size:14px;color:#202124;font-weight:400;">New Step</div>
<div class="t" style="right:604px;top:158.70px;font-size:13px;color:#202124;font-weight:400;">100%</div>
<div class="t" style="left:957.5px;top:140.07px;font-size:11.5px;color:#80868b;font-weight:400;">Step 2</div>
<div class="t" style="left:957.5px;top:157.85px;font-size:14px;color:#202124;font-weight:400;">New Step</div>
<div class="t" style="right:333px;top:158.70px;font-size:13px;color:#202124;font-weight:400;">7.9%</div>
<div class="t" style="left:1228.5px;top:140.07px;font-size:11.5px;color:#80868b;font-weight:400;">Step 3</div>
<div class="t" style="left:1228.5px;top:157.85px;font-size:14px;color:#202124;font-weight:400;">New Step</div>
<div class="t" style="right:62px;top:158.70px;font-size:13px;color:#202124;font-weight:400;">2.2%</div>
<div style="position:absolute;left:636px;top:190px;width:30px;height:1px;background:#e0e0e0;"></div>
<div style="position:absolute;left:636px;top:275.5px;width:30px;height:1px;background:#e0e0e0;"></div>
<div style="position:absolute;left:636px;top:361px;width:30px;height:1px;background:#e0e0e0;"></div>
<div class="t" style="left:636.8px;top:196.69px;font-size:11px;color:#70757a;font-weight:400;">1.9K</div>
<div class="t" style="left:636.4px;top:282.27px;font-size:11.5px;color:#70757a;font-weight:400;">948</div>
<div class="t" style="left:636.4px;top:347.77px;font-size:11.5px;color:#70757a;font-weight:400;">0</div>
<div style="position:absolute;left:676px;top:361px;width:813px;height:1px;background:#e0e0e0;"></div>
<div style="position:absolute;left:676px;top:193.3px;width:190px;height:168px;background:#669df6;"></div>
<div style="position:absolute;left:947px;top:282.4px;width:190px;height:64px;background:#669df6;"></div>
<div style="position:absolute;left:947px;top:348.8px;width:190px;height:12.7px;background:#4285f4;"></div>
<div style="position:absolute;left:1218px;top:356.6px;width:190px;height:1.5px;background:#9db5e0;"></div>
<div style="position:absolute;left:1218px;top:359.8px;width:190px;height:2px;background:#6e9ade;"></div>
<div class="t" style="left:683.5px;top:370.75px;font-size:14px;color:#5f6368;font-weight:400;">Abandonment rate</div>
<div style="position:absolute;left:683px;top:390.2px;width:13.5px;height:13.5px;background:#4285f4;"></div>
<div class="t" style="left:704.5px;top:390.27px;font-size:13.5px;color:#202124;font-weight:400;">1.7K</div>
<div class="t" style="left:739.7px;top:390.27px;font-size:13.5px;color:#80868b;font-weight:400;">92.1%</div>
<div class="t" style="left:954.5px;top:370.75px;font-size:14px;color:#5f6368;font-weight:400;">Abandonment rate</div>
<div style="position:absolute;left:954px;top:390.2px;width:13.5px;height:13.5px;background:#4285f4;"></div>
<div class="t" style="left:975.5px;top:390.27px;font-size:13.5px;color:#202124;font-weight:400;">858</div>
<div class="t" style="left:1010.7px;top:390.27px;font-size:13.5px;color:#80868b;font-weight:400;">97.8%</div>
<svg style="position:absolute;left:1466px;top:319px;" width="18" height="18" viewBox="0 0 18 18"><circle cx="8.8" cy="8.9" r="7.4" stroke="#bdc1c6" stroke-width="1.3" fill="none"/><path d="M8.8 4.8V13M4.7 8.9H12.9" stroke="#bdc1c6" stroke-width="1.4"/></svg>
<svg style="position:absolute;left:1466px;top:339px;" width="18" height="18" viewBox="0 0 18 18"><circle cx="8.8" cy="8.9" r="7.4" stroke="#bdc1c6" stroke-width="1.3" fill="none"/><path d="M4.7 8.9H12.9" stroke="#bdc1c6" stroke-width="1.4"/></svg>
<div style="position:absolute;left:0px;top:822px;width:1489px;height:139px;background:#fff;"></div>
<div style="position:absolute;left:1489px;top:822px;width:52px;height:139px;background:#f8f9fa;"></div>
<div style="position:absolute;left:635px;top:429px;width:854px;height:1px;background:#e0e0e0;"></div>
<div style="position:absolute;left:636px;top:494px;width:853px;height:36px;background:#f8f9fa;"></div>
<div style="position:absolute;left:636px;top:530px;width:853px;height:1px;background:#e0e0e0;"></div>
<div class="t" style="left:652.5px;top:503.85px;font-size:14px;color:#202124;font-weight:400;">1</div>
<div class="t" style="left:692.5px;top:503.85px;font-size:14px;color:#202124;font-weight:400;-webkit-text-stroke:0.4px currentColor;">New Step</div>
<div class="t" style="left:842.4px;top:503.85px;font-size:14px;color:#202124;font-weight:400;-webkit-text-stroke:0.4px currentColor;">Total</div>
<div class="t" style="right:441.5px;top:503.85px;font-size:14px;color:#202124;">1,859 <span style="color:#70757a">(100%)</span></div>
<div class="t" style="right:327.5px;top:503.85px;font-size:14px;color:#202124;font-weight:400;">7.91%</div>
<div class="t" style="right:199px;top:503.85px;font-size:14px;color:#202124;font-weight:400;">1,712</div>
<div class="t" style="right:69.40000000000009px;top:503.85px;font-size:14px;color:#202124;font-weight:400;">92.09%</div>
<div style="position:absolute;left:636px;top:531px;width:853px;height:36px;background:#f8f9fa;"></div>
<div style="position:absolute;left:636px;top:567px;width:853px;height:1px;background:#e0e0e0;"></div>
<div class="t" style="left:842.4px;top:540.85px;font-size:14px;color:#202124;font-weight:400;-webkit-text-stroke:0.4px currentColor;">desktop</div>
<div class="t" style="right:441.5px;top:540.85px;font-size:14px;color:#202124;">935 <span style="color:#70757a">(100%)</span></div>
<div class="t" style="right:327.5px;top:540.85px;font-size:14px;color:#202124;font-weight:400;">8.02%</div>
<div class="t" style="right:199px;top:540.85px;font-size:14px;color:#202124;font-weight:400;">860</div>
<div class="t" style="right:69.40000000000009px;top:540.85px;font-size:14px;color:#202124;font-weight:400;">91.98%</div>
<div style="position:absolute;left:636px;top:568px;width:853px;height:36px;background:#f8f9fa;"></div>
<div style="position:absolute;left:636px;top:604px;width:853px;height:1px;background:#e0e0e0;"></div>
<div class="t" style="left:842.4px;top:577.85px;font-size:14px;color:#202124;font-weight:400;-webkit-text-stroke:0.4px currentColor;">mobile</div>
<div class="t" style="right:441.5px;top:577.85px;font-size:14px;color:#202124;">903 <span style="color:#70757a">(100%)</span></div>
<div class="t" style="right:327.5px;top:577.85px;font-size:14px;color:#202124;font-weight:400;">7.75%</div>
<div class="t" style="right:199px;top:577.85px;font-size:14px;color:#202124;font-weight:400;">833</div>
<div class="t" style="right:69.40000000000009px;top:577.85px;font-size:14px;color:#202124;font-weight:400;">92.25%</div>
<div style="position:absolute;left:636px;top:605px;width:853px;height:36px;background:#f8f9fa;"></div>
<div style="position:absolute;left:636px;top:641px;width:853px;height:1px;background:#e0e0e0;"></div>
<div class="t" style="left:842.4px;top:614.85px;font-size:14px;color:#202124;font-weight:400;-webkit-text-stroke:0.4px currentColor;">tablet</div>
<div class="t" style="right:441.5px;top:614.85px;font-size:14px;color:#202124;">21 <span style="color:#70757a">(100%)</span></div>
<div class="t" style="right:327.5px;top:614.85px;font-size:14px;color:#202124;font-weight:400;">9.52%</div>
<div class="t" style="right:199px;top:614.85px;font-size:14px;color:#202124;font-weight:400;">19</div>
<div class="t" style="right:69.40000000000009px;top:614.85px;font-size:14px;color:#202124;font-weight:400;">90.48%</div>
<div style="position:absolute;left:636px;top:678px;width:853px;height:1px;background:#e0e0e0;"></div>
<div class="t" style="left:652.5px;top:651.85px;font-size:14px;color:#202124;font-weight:400;">2</div>
<div class="t" style="left:692.5px;top:651.85px;font-size:14px;color:#202124;font-weight:400;-webkit-text-stroke:0.4px currentColor;">New Step</div>
<div class="t" style="left:842.4px;top:651.85px;font-size:14px;color:#202124;font-weight:400;-webkit-text-stroke:0.4px currentColor;">Total</div>
<div class="t" style="right:441.5px;top:651.85px;font-size:14px;color:#202124;">877 <span style="color:#70757a">(47.18%)</span></div>
<div class="t" style="right:327.5px;top:651.85px;font-size:14px;color:#202124;font-weight:400;">2.17%</div>
<div class="t" style="right:199px;top:651.85px;font-size:14px;color:#202124;font-weight:400;">858</div>
<div class="t" style="right:69.40000000000009px;top:651.85px;font-size:14px;color:#202124;font-weight:400;">97.83%</div>
<div style="position:absolute;left:636px;top:715px;width:853px;height:1px;background:#e0e0e0;"></div>
<div class="t" style="left:842.4px;top:688.85px;font-size:14px;color:#202124;font-weight:400;-webkit-text-stroke:0.4px currentColor;">desktop</div>
<div class="t" style="right:441.5px;top:688.85px;font-size:14px;color:#202124;">438 <span style="color:#70757a">(46.84%)</span></div>
<div class="t" style="right:327.5px;top:688.85px;font-size:14px;color:#202124;font-weight:400;">2.74%</div>
<div class="t" style="right:199px;top:688.85px;font-size:14px;color:#202124;font-weight:400;">426</div>
<div class="t" style="right:69.40000000000009px;top:688.85px;font-size:14px;color:#202124;font-weight:400;">97.26%</div>
<div style="position:absolute;left:636px;top:752px;width:853px;height:1px;background:#e0e0e0;"></div>
<div class="t" style="left:842.4px;top:725.85px;font-size:14px;color:#202124;font-weight:400;-webkit-text-stroke:0.4px currentColor;">mobile</div>
<div class="t" style="right:441.5px;top:725.85px;font-size:14px;color:#202124;">431 <span style="color:#70757a">(47.73%)</span></div>
<div class="t" style="right:327.5px;top:725.85px;font-size:14px;color:#202124;font-weight:400;">1.62%</div>
<div class="t" style="right:199px;top:725.85px;font-size:14px;color:#202124;font-weight:400;">424</div>
<div class="t" style="right:69.40000000000009px;top:725.85px;font-size:14px;color:#202124;font-weight:400;">98.38%</div>
<div style="position:absolute;left:636px;top:789px;width:853px;height:1px;background:#e0e0e0;"></div>
<div class="t" style="left:842.4px;top:762.85px;font-size:14px;color:#202124;font-weight:400;-webkit-text-stroke:0.4px currentColor;">tablet</div>
<div class="t" style="right:441.5px;top:762.85px;font-size:14px;color:#202124;">8 <span style="color:#70757a">(38.1%)</span></div>
<div class="t" style="right:327.5px;top:762.85px;font-size:14px;color:#202124;font-weight:400;">0%</div>
<div class="t" style="right:199px;top:762.85px;font-size:14px;color:#202124;font-weight:400;">8</div>
<div class="t" style="right:69.40000000000009px;top:762.85px;font-size:14px;color:#202124;font-weight:400;">100%</div>
<div style="position:absolute;left:636px;top:790px;width:853px;height:36px;background:#f8f9fa;"></div>
<div style="position:absolute;left:636px;top:826px;width:853px;height:1px;background:#e0e0e0;"></div>
<div class="t" style="left:652.5px;top:799.85px;font-size:14px;color:#202124;font-weight:400;">3</div>
<div class="t" style="left:692.5px;top:799.85px;font-size:14px;color:#202124;font-weight:400;-webkit-text-stroke:0.4px currentColor;">New Step</div>
<div class="t" style="left:842.4px;top:799.85px;font-size:14px;color:#202124;font-weight:400;-webkit-text-stroke:0.4px currentColor;">Total</div>
<div class="t" style="right:441.5px;top:799.85px;font-size:14px;color:#202124;">51 <span style="color:#70757a">(2.74%)</span></div>
<div class="t" style="right:327.5px;top:799.85px;font-size:14px;color:#202124;font-weight:400;">-</div>
<div class="t" style="right:199px;top:799.85px;font-size:14px;color:#202124;font-weight:400;">-</div>
<div class="t" style="right:69.40000000000009px;top:799.85px;font-size:14px;color:#202124;font-weight:400;">-</div>
<div style="position:absolute;left:636px;top:827px;width:853px;height:36px;background:#f8f9fa;"></div>
<div style="position:absolute;left:636px;top:863px;width:853px;height:1px;background:#e0e0e0;"></div>
<div class="t" style="left:842.4px;top:836.85px;font-size:14px;color:#202124;font-weight:400;-webkit-text-stroke:0.4px currentColor;">desktop</div>
<div class="t" style="right:441.5px;top:836.85px;font-size:14px;color:#202124;">37 <span style="color:#70757a">(3.96%)</span></div>
<div class="t" style="right:327.5px;top:836.85px;font-size:14px;color:#202124;font-weight:400;">-</div>
<div class="t" style="right:199px;top:836.85px;font-size:14px;color:#202124;font-weight:400;">-</div>
<div class="t" style="right:69.40000000000009px;top:836.85px;font-size:14px;color:#202124;font-weight:400;">-</div>
<div style="position:absolute;left:636px;top:864px;width:853px;height:36px;background:#f8f9fa;"></div>
<div style="position:absolute;left:636px;top:900px;width:853px;height:1px;background:#e0e0e0;"></div>
<div class="t" style="left:842.4px;top:873.85px;font-size:14px;color:#202124;font-weight:400;-webkit-text-stroke:0.4px currentColor;">mobile</div>
<div class="t" style="right:441.5px;top:873.85px;font-size:14px;color:#202124;">14 <span style="color:#70757a">(1.55%)</span></div>
<div class="t" style="right:327.5px;top:873.85px;font-size:14px;color:#202124;font-weight:400;">-</div>
<div class="t" style="right:199px;top:873.85px;font-size:14px;color:#202124;font-weight:400;">-</div>
<div class="t" style="right:69.40000000000009px;top:873.85px;font-size:14px;color:#202124;font-weight:400;">-</div>
<div style="position:absolute;left:636px;top:901px;width:853px;height:36px;background:#f8f9fa;"></div>
<div class="t" style="left:842.4px;top:910.85px;font-size:14px;color:#202124;font-weight:400;-webkit-text-stroke:0.4px currentColor;">tablet</div>
<div class="t" style="right:441.5px;top:910.85px;font-size:14px;color:#202124;">0 <span style="color:#70757a">(0%)</span></div>
<div class="t" style="right:327.5px;top:910.85px;font-size:14px;color:#202124;font-weight:400;">-</div>
<div class="t" style="right:199px;top:910.85px;font-size:14px;color:#202124;font-weight:400;">-</div>
<div class="t" style="right:69.40000000000009px;top:910.85px;font-size:14px;color:#202124;font-weight:400;">-</div>
<div style="position:absolute;left:975px;top:430px;width:1px;height:507px;background:#e0e0e0;"></div>
<div style="position:absolute;left:1116px;top:430px;width:1px;height:507px;background:#e0e0e0;"></div>
<div style="position:absolute;left:1230px;top:430px;width:1px;height:507px;background:#e0e0e0;"></div>
<div style="position:absolute;left:1358px;top:430px;width:1px;height:507px;background:#e0e0e0;"></div>
<div style="position:absolute;left:1488px;top:430px;width:1px;height:507px;background:#e0e0e0;"></div>
<div class="t" style="left:698.3px;top:444.75px;font-size:14px;color:#5f6368;font-weight:400;-webkit-text-stroke:0.4px currentColor;">Step</div>
<div class="t" style="right:592px;top:444.45px;font-size:14px;color:#5f6368;font-weight:400;-webkit-text-stroke:0.4px currentColor;">Device</div>
<div class="t" style="right:592px;top:464.45px;font-size:14px;color:#5f6368;font-weight:400;-webkit-text-stroke:0.4px currentColor;">category</div>
<div class="t" style="right:441.5px;top:444.65px;font-size:14px;color:#5f6368;font-weight:400;-webkit-text-stroke:0.4px currentColor;">Active users (%</div>
<div style="position:absolute;left:1004.0px;top:461.0px;width:95.5px;height:1px;background:repeating-linear-gradient(90deg,#70757a 0 3px,transparent 3px 5px);"></div>
<div class="t" style="right:441.5px;top:464.65px;font-size:14px;color:#5f6368;font-weight:400;-webkit-text-stroke:0.4px currentColor;">of Step 1)</div>
<div style="position:absolute;left:1037.5px;top:481.0px;width:62px;height:1px;background:repeating-linear-gradient(90deg,#70757a 0 3px,transparent 3px 5px);"></div>
<div class="t" style="right:327.5px;top:444.65px;font-size:14px;color:#5f6368;font-weight:400;-webkit-text-stroke:0.4px currentColor;">Completion</div>
<div style="position:absolute;left:1141.5px;top:461.0px;width:72px;height:1px;background:repeating-linear-gradient(90deg,#70757a 0 3px,transparent 3px 5px);"></div>
<div class="t" style="right:327.5px;top:464.65px;font-size:14px;color:#5f6368;font-weight:400;-webkit-text-stroke:0.4px currentColor;">rate</div>
<div style="position:absolute;left:1189.5px;top:481.0px;width:24px;height:1px;background:repeating-linear-gradient(90deg,#70757a 0 3px,transparent 3px 5px);"></div>
<div class="t" style="right:199px;top:444.65px;font-size:14px;color:#5f6368;font-weight:400;-webkit-text-stroke:0.4px currentColor;">Abandonments</div>
<div style="position:absolute;left:1246px;top:461.0px;width:96px;height:1px;background:repeating-linear-gradient(90deg,#70757a 0 3px,transparent 3px 5px);"></div>
<div class="t" style="right:69.40000000000009px;top:444.65px;font-size:14px;color:#5f6368;font-weight:400;-webkit-text-stroke:0.4px currentColor;">Abandonment</div>
<div style="position:absolute;left:1382.6px;top:461.0px;width:89px;height:1px;background:repeating-linear-gradient(90deg,#70757a 0 3px,transparent 3px 5px);"></div>
<div class="t" style="right:69.40000000000009px;top:464.65px;font-size:14px;color:#5f6368;font-weight:400;-webkit-text-stroke:0.4px currentColor;">rate</div>
<div style="position:absolute;left:1447.6px;top:481.0px;width:24px;height:1px;background:repeating-linear-gradient(90deg,#70757a 0 3px,transparent 3px 5px);"></div>
</body></html>
